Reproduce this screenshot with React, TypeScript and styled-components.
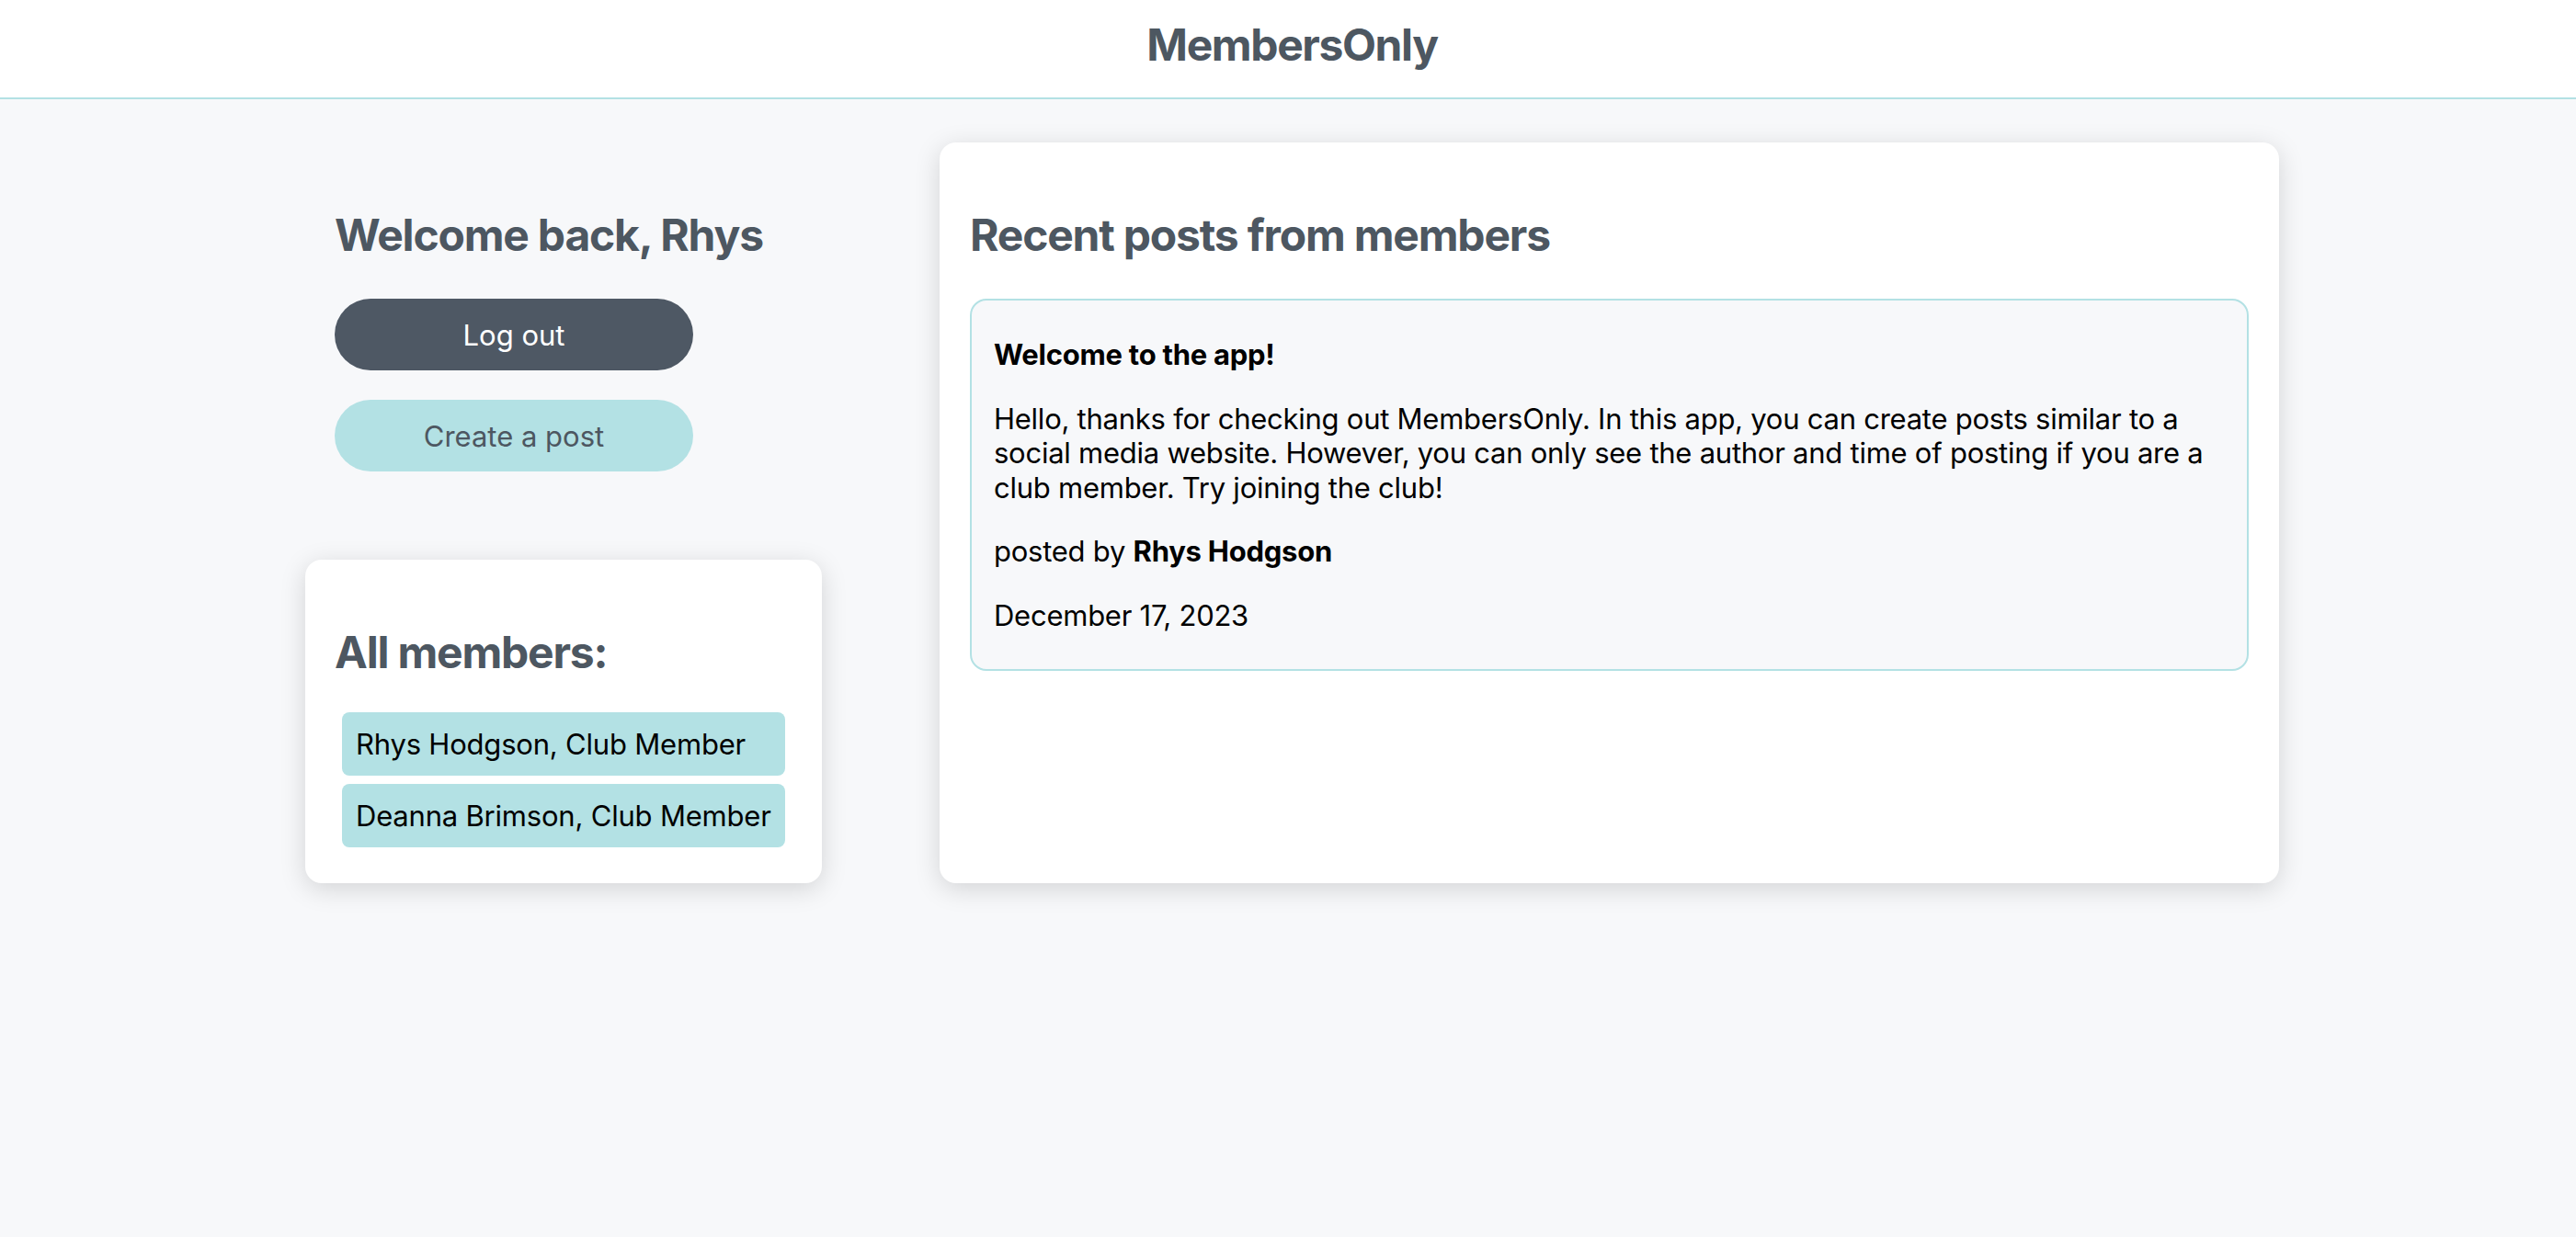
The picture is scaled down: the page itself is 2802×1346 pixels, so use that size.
import React from "react";
import styled, { createGlobalStyle } from "styled-components";

const GlobalStyle = createGlobalStyle`
  html, body {
    margin: 0;
    padding: 0;
    min-height: 100%;
  }
  body {
    background: #f7f8fa;
    font-family: Inter, "Noto Sans", "Liberation Sans", sans-serif;
    color: #000;
  }
  * { box-sizing: border-box; }
`;

const Page = styled.div`
  min-height: 100vh;
  background: #f7f8fa;
`;

const Header = styled.header`
  height: 108px;
  background: #ffffff;
  border-bottom: 2px solid #b3e1e4;
  display: flex;
  align-items: center;
  justify-content: center;
  padding: 0 0 10px 9px;
`;

const Logo = styled.h1`
  margin: 0;
  font-size: 48px;
  font-weight: 700;
  color: #4d5761;
  letter-spacing: -1.4px;
`;

const Main = styled.main`
  display: grid;
  grid-template-columns: 562px 1457px;
  column-gap: 128px;
  justify-content: center;
  align-items: stretch;
  padding: 47px 0 80px 9px;
`;

const LeftColumn = styled.div`
  display: flex;
  flex-direction: column;
  gap: 64px;
`;

const Welcome = styled.section`
  padding: 32px;
`;

const Card = styled.section`
  background: #ffffff;
  border-radius: 18px;
  padding: 32px;
  box-shadow: 0 6px 28px rgba(0, 0, 0, 0.15);
`;

const MembersCard = styled(Card)`
  padding-bottom: 39px;
`;

const Heading = styled.h2`
  margin: 40px 0;
  font-size: 48px;
  font-weight: 700;
  color: #4d5761;
  letter-spacing: -1.2px;
  line-height: 58px;
`;

const ButtonStack = styled.div`
  display: flex;
  flex-direction: column;
  gap: 32px;
`;

const PillButton = styled.button<{ $variant: "dark" | "light" }>`
  width: 390px;
  height: 78px;
  border: none;
  border-radius: 39px;
  font-family: inherit;
  font-size: 31px;
  cursor: pointer;
  background: ${(p) => (p.$variant === "dark" ? "#4e5864" : "#b3e1e4")};
  color: ${(p) => (p.$variant === "dark" ? "#ffffff" : "#4d5761")};
`;

const MemberList = styled.ul`
  list-style: none;
  margin: -4px 0 0;
  padding: 0;
  display: flex;
  flex-direction: column;
  gap: 9px;
`;

const MemberItem = styled.li`
  margin: 0 8px;
  padding: 16px 15px;
  background: #b3e1e4;
  border-radius: 8px;
  font-size: 31px;
  line-height: 37px;
  color: #000;
  letter-spacing: -0.2px;
`;

const PostsCard = styled(Card)`
  padding: 32px 33px;
`;

const PostBox = styled.article`
  background: #f7f8fa;
  border: 2px solid #b3e1e4;
  border-radius: 18px;
  padding: 8px 24px;
`;

const PostText = styled.p<{ $bold?: boolean }>`
  margin: 32px 0;
  font-size: 31px;
  line-height: 37.5px;
  font-weight: ${(p) => (p.$bold ? 700 : 400)};
  color: #000;
  letter-spacing: -0.25px;
`;

const Author = styled.strong`
  font-weight: 700;
`;

export default function App() {
  return (
    <Page>
      <GlobalStyle />
      <Header>
        <Logo>MembersOnly</Logo>
      </Header>
      <Main>
        <LeftColumn>
          <Welcome>
            <Heading>Welcome back, Rhys</Heading>
            <ButtonStack>
              <PillButton $variant="dark">Log out</PillButton>
              <PillButton $variant="light">Create a post</PillButton>
            </ButtonStack>
          </Welcome>
          <MembersCard>
            <Heading>All members:</Heading>
            <MemberList>
              <MemberItem>Rhys Hodgson, Club Member</MemberItem>
              <MemberItem>Deanna Brimson, Club Member</MemberItem>
            </MemberList>
          </MembersCard>
        </LeftColumn>
        <PostsCard>
          <Heading>Recent posts from members</Heading>
          <PostBox>
            <PostText $bold>Welcome to the app!</PostText>
            <PostText>
              Hello, thanks for checking out MembersOnly. In this app, you can
              create posts similar to a social media website. However, you can
              only see the author and time of posting if you are a club member.
              Try joining the club!
            </PostText>
            <PostText>
              posted by <Author>Rhys Hodgson</Author>
            </PostText>
            <PostText>December 17, 2023</PostText>
          </PostBox>
        </PostsCard>
      </Main>
    </Page>
  );
}
